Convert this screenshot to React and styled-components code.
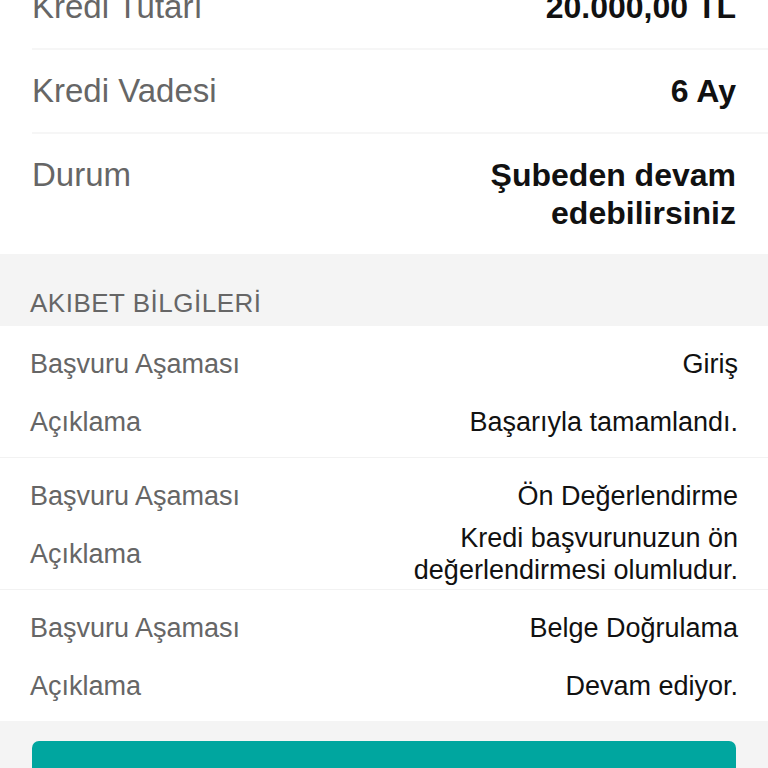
import React from "react";
import styled, { createGlobalStyle } from "styled-components";

const GlobalStyle = createGlobalStyle`
  html, body {
    margin: 0;
    padding: 0;
    background: #ffffff;
    overflow: hidden;
  }
  body {
    font-family: "Liberation Sans", Arial, Helvetica, sans-serif;
  }
`;

const Page = styled.div`
  width: 768px;
  height: 768px;
  overflow: hidden;
  background: #f4f4f4;
  display: flex;
  flex-direction: column;
`;

// the list is scrolled a bit, the first row is cut off at the top
const Summary = styled.div`
  background: #ffffff;
  margin-top: -34px;
`;

const SummaryRow = styled.div`
  display: flex;
  justify-content: space-between;
  align-items: ${(p) => (p.$top ? "flex-start" : "center")};
  margin-left: 32px;
  padding: 22px 32px 22px 0;
  border-bottom: ${(p) => (p.$last ? "none" : "2px solid #f6f6f6")};
  line-height: 38px;
`;

const SummaryLabel = styled.div`
  font-size: 33px;
  color: #666666;
  white-space: nowrap;
`;

const SummaryValue = styled.div`
  font-size: 32px;
  font-weight: 700;
  color: #111111;
  text-align: right;
  max-width: 300px;
`;

const SectionHeader = styled.div`
  padding: 33px 30px 7px;
  font-size: 26px;
  letter-spacing: 0.5px;
  line-height: 32px;
  color: #666666;
`;

const StageGroup = styled.div`
  background: #ffffff;
  padding: 9px 0 6px;
  border-bottom: ${(p) => (p.$last ? "none" : "1px solid #f2f2f2")};
`;

const StageRow = styled.div`
  height: 58px;
  padding: 0 30px;
  display: flex;
  justify-content: space-between;
  align-items: center;
  font-size: 27px;
  line-height: 32px;
`;

const StageLabel = styled.div`
  color: #666666;
  white-space: nowrap;
`;

const StageValue = styled.div`
  color: #111111;
  text-align: right;
  max-width: 400px;
`;

const Footer = styled.div`
  padding: 20px 32px;
`;

const PrimaryButton = styled.button`
  width: 100%;
  height: 90px;
  border: none;
  border-radius: 7px;
  background: #00a69f;
  color: #ffffff;
  font-family: inherit;
  font-size: 30px;
`;

const summary = [
  { label: "Kredi Tutarı", value: "20.000,00 TL" },
  { label: "Kredi Vadesi", value: "6 Ay" },
  { label: "Durum", value: "Şubeden devam edebilirsiniz" },
];

const stages = [
  { stage: "Giriş", note: "Başarıyla tamamlandı." },
  { stage: "Ön Değerlendirme", note: "Kredi başvurunuzun ön değerlendirmesi olumludur." },
  { stage: "Belge Doğrulama", note: "Devam ediyor." },
];

export default function App() {
  return (
    <>
      <GlobalStyle />
      <Page>
        <Summary>
          {summary.map((row, i) => (
            <SummaryRow
              key={row.label}
              $last={i === summary.length - 1}
              $top={i === summary.length - 1}
            >
              <SummaryLabel>{row.label}</SummaryLabel>
              <SummaryValue>{row.value}</SummaryValue>
            </SummaryRow>
          ))}
        </Summary>

        <SectionHeader>AKIBET BİLGİLERİ</SectionHeader>

        {stages.map((s, i) => (
          <StageGroup key={s.stage} $last={i === stages.length - 1}>
            <StageRow>
              <StageLabel>Başvuru Aşaması</StageLabel>
              <StageValue>{s.stage}</StageValue>
            </StageRow>
            <StageRow>
              <StageLabel>Açıklama</StageLabel>
              <StageValue>{s.note}</StageValue>
            </StageRow>
          </StageGroup>
        ))}

        <Footer>
          <PrimaryButton>Devam Et</PrimaryButton>
        </Footer>
      </Page>
    </>
  );
}
